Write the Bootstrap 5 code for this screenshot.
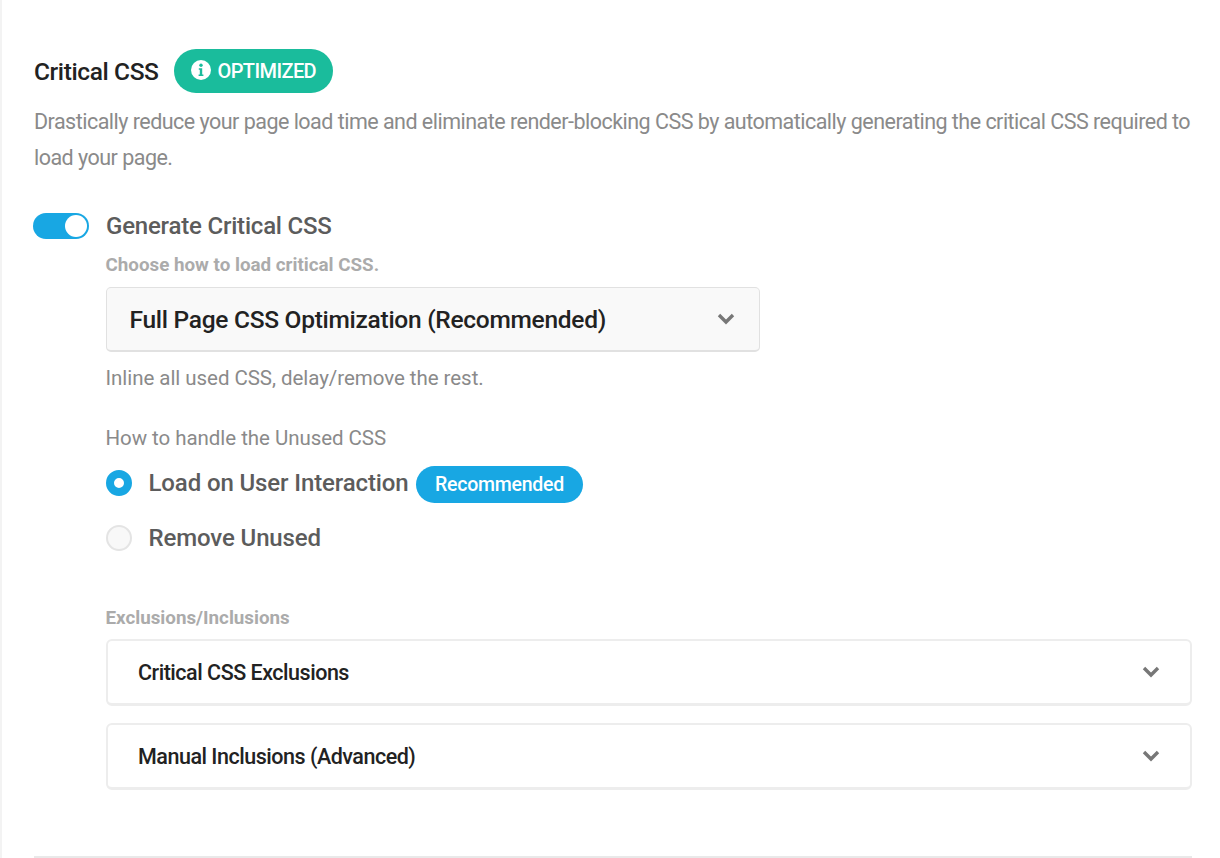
<!DOCTYPE html>
<html lang="en"><head><meta charset="utf-8"><title>Critical CSS</title>
<link href="https://cdn.jsdelivr.net/npm/bootstrap@5.3.0/dist/css/bootstrap.min.css" rel="stylesheet">
<style>
html,body{height:858px;overflow:hidden;background:#fff}
body{font-family:Roboto,sans-serif;color:#212121}
.pane{height:858px;border-left:2px solid #f3f3f3;padding:48px 28px 0 31px}
.ttl{font-size:24.5px;font-weight:500;letter-spacing:-.4px;color:#222;line-height:46px;margin:0 0 0 1px;padding-top:1px}
.opt{height:44px;width:159px;border-radius:22px;background:#1abc9c;color:#fff;font-size:20px;font-weight:500;letter-spacing:-.6px;gap:7px;padding-left:17px;margin:0 0 1px 15px}
.opt svg{margin-top:-2px}
.desc{font-size:21.5px;letter-spacing:-.52px;line-height:36px;color:#8a8a8a;margin:9px -6px 0 1px}
.sw{width:56px;height:26px;border-radius:13px;background:#18a7e3;flex:none;padding:2px 2px 2px 32px}
.sw i{display:block;width:22px;height:22px;border-radius:50%;background:#fff}
.gen{margin-top:37px;height:26px;gap:17px}
.genl{font-size:24px;font-weight:500;letter-spacing:-.2px;color:#5c5c5c}
.inner{padding-left:72.5px}
.cap{font-size:18.8px;font-weight:700;color:#ababab;line-height:24px}
.cap-a{margin-top:14px}
.cap-b{margin-top:53px}
.sel{margin-top:10px;width:654px;height:65px;background:#f9f9f9;border:1px solid #e1e1e1;border-bottom-width:2px;border-radius:5px;padding:0 23px;font-size:24.5px;font-weight:500;letter-spacing:-.28px;color:#222}
.sel span{padding-top:2px}
.hint{font-size:20.5px;letter-spacing:-.05px;color:#8a8a8a;line-height:28px;margin-top:12px}
.hint-b{margin-top:32px}
.optrow{gap:17px;margin-top:10px}
.optrow-b{margin-top:20px}
.rad{width:26px;height:26px;border-radius:50%;flex:none}
.rad.on{border:8px solid #18a7e3;background:#fff}
.rad.off{border:2px solid #e4e4e4;background:#f8f8f8}
.radl{font-size:24px;font-weight:500;letter-spacing:-.12px;color:#5c5c5c;line-height:30px}
.rec{height:37px;width:167px;border-radius:19px;background:#18a7e3;color:#fff;font-size:19.5px;font-weight:500;letter-spacing:-.25px;justify-content:center;margin:4px 0 0 7.5px}
.acc{height:67px;border:2px solid #ededed;border-bottom-width:3px;border-radius:6px;padding:0 29px 0 30.5px;font-size:21.5px;font-weight:500;letter-spacing:-.48px;color:#222;margin-bottom:17px}
.acc span{padding-top:2px}
.acc-a{margin-top:9px}
.rule{border:0;border-top:2px solid #e9e9e9;opacity:1;margin:66px 0 0 1px}
</style></head><body>
<div class="pane">
  <div class="d-flex align-items-center">
    <h1 class="ttl">Critical CSS</h1>
    <span class="opt d-flex align-items-center"><svg width="20" height="20" viewBox="0 0 20 20"><circle cx="10" cy="10" r="10" fill="#fff"/><circle cx="10" cy="5.3" r="1.7" fill="#1abc9c"/><path d="M7.8 8.2h3.4v6.2h1.2v1.6H7.6v-1.6h1.2V9.8h-1z" fill="#1abc9c"/></svg>OPTIMIZED</span>
  </div>
  <p class="desc">Drastically reduce your page load time and eliminate render-blocking CSS by automatically generating the critical CSS required to load your page.</p>
  <div class="gen d-flex align-items-center"><span class="sw"><i></i></span><span class="genl">Generate Critical CSS</span></div>
  <div class="inner">
    <div class="cap cap-a">Choose how to load critical CSS.</div>
    <div class="sel d-flex align-items-center justify-content-between"><span>Full Page CSS Optimization (Recommended)</span><svg width="20" height="12" viewBox="0 0 20 12"><path d="M3 2l7 7 7-7" fill="none" stroke="#777" stroke-width="3.4"/></svg></div>
    <div class="hint">Inline all used CSS, delay/remove the rest.</div>
    <div class="hint hint-b">How to handle the Unused CSS</div>
    <div class="optrow d-flex align-items-center"><span class="rad on"></span><div class="d-flex align-items-center"><span class="radl">Load on User Interaction</span><span class="rec d-flex align-items-center">Recommended</span></div></div>
    <div class="optrow optrow-b d-flex align-items-center"><span class="rad off"></span><span class="radl">Remove Unused</span></div>
    <div class="cap cap-b">Exclusions/Inclusions</div>
    <div class="acc acc-a d-flex align-items-center justify-content-between"><span>Critical CSS Exclusions</span><svg width="20" height="12" viewBox="0 0 20 12"><path d="M3 2l7 7 7-7" fill="none" stroke="#777" stroke-width="3.4"/></svg></div>
    <div class="acc d-flex align-items-center justify-content-between"><span>Manual Inclusions (Advanced)</span><svg width="20" height="12" viewBox="0 0 20 12"><path d="M3 2l7 7 7-7" fill="none" stroke="#777" stroke-width="3.4"/></svg></div>
  </div>
  <hr class="rule">
</div>
<script src="https://cdn.jsdelivr.net/npm/bootstrap@5.3.0/dist/js/bootstrap.bundle.min.js"></script>
</body></html>
